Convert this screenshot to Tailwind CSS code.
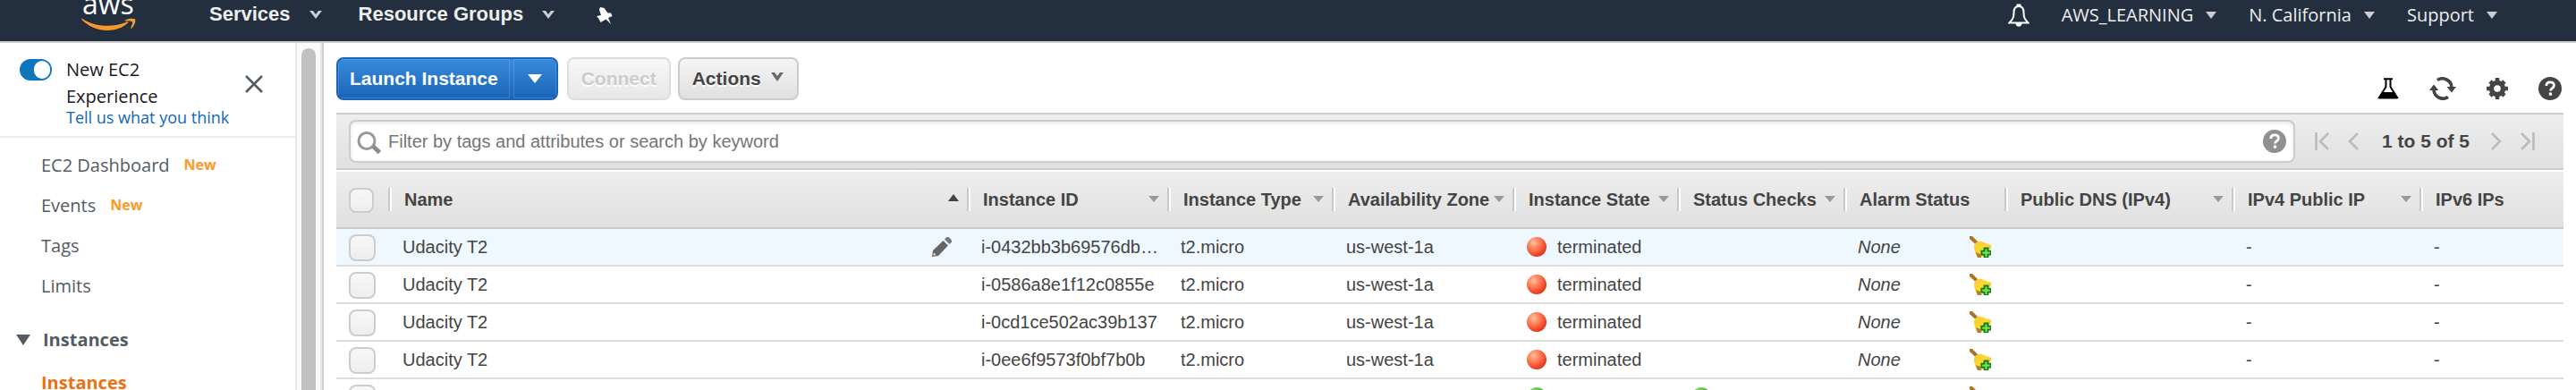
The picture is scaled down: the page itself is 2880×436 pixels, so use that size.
<!DOCTYPE html>
<html lang="en">
<head>
<meta charset="utf-8">
<title>EC2 Management Console</title>
<script src="https://cdn.jsdelivr.net/npm/@tailwindcss/browser@4"></script>
</head>
<body class="flex h-screen flex-col overflow-hidden bg-white font-['Liberation_Sans',Arial,sans-serif] text-xl text-[#444]">

<svg class="absolute h-0 w-0" aria-hidden="true">
  <defs>
    <radialGradient id="red" cx="35%" cy="30%" r="75%"><stop offset="0" stop-color="#ffc09a"/><stop offset=".55" stop-color="#ff6a45"/><stop offset="1" stop-color="#dc3018"/></radialGradient>
    <radialGradient id="green" cx="35%" cy="30%" r="75%"><stop offset="0" stop-color="#a8f07a"/><stop offset=".55" stop-color="#4ec22e"/><stop offset="1" stop-color="#238a14"/></radialGradient>
    <linearGradient id="gold" x1="0" y1="0" x2="1" y2="1"><stop offset="0" stop-color="#f3c93a"/><stop offset=".5" stop-color="#ffd92e"/><stop offset="1" stop-color="#e0a52a"/></linearGradient>
  </defs>
  <symbol id="i-bellplus" viewBox="0 0 24 24">
    <path d="M0 0h3l7 7-3 2.500L0 3z" fill="#a8752a"/>
    <path d="M7 7.500C9 5.500 13 5 16 7l8 3v3L13 24H9C7 21 5 16 5 12c0-2 .8-3.500 2-4.500z" fill="url(#gold)"/>
    <path d="M7 18l2 6h4l-1-4z" fill="#b07d33"/>
    <path d="M16.500 13.500h4v3.200h3.200v4h-3.200V24h-4v-3.300h-3.200v-4h3.200z" fill="#7be04a" stroke="#0f7d16" stroke-width="1.800"/>
  </symbol>
  <symbol id="i-help" viewBox="0 0 26 26">
    <circle cx="13" cy="13" r="13" fill="currentColor"/>
    <path d="M8.800 10c0-2.700 1.900-4.200 4.300-4.200 2.500 0 4.300 1.400 4.300 3.700 0 3-3.900 3.100-3.900 6" fill="none" stroke="#fff" stroke-width="2.800"/>
    <rect x="11.900" y="17.500" width="3.200" height="3.200" fill="#fff"/>
  </symbol>
</svg>

<header class="flex h-12 shrink-0 items-start border-b-2 border-[#ccc] bg-[#232f3e] text-[#eee] [text-shadow:0_2px_0_#000]">
  <a href="#" aria-label="aws" class="ml-[90px] mr-20 block">
    <svg class="block" width="64" height="46" viewBox="0 0 64 46">
      <text x="2" y="16" font-family="Open Sans, sans-serif" font-size="32" font-weight="500" fill="#fff" style="text-shadow:none">aws</text>
      <path d="M1 21.500c-.6-.7.300-1 1-.5 8 5 17 7.800 28 7.800 8 0 15.500-1.700 22-4.400 1.200-.5 2 .5 1 1.400C47 31 39 34 30 34 18 34 8 29 1 21.500z" fill="#f7982f"/>
      <path d="M50 22.500c3-1.800 8-2.300 11-1.300 1 2.500-.5 7.500-4 10.600-.8.500-1.200.2-.8-.6 1-2.300 2.300-5.800 1.700-6.900-.7-1-4.500-.9-7.200-.8-1 0-1.300-.5-.7-1z" fill="#f7982f"/>
    </svg>
  </a>
  <nav class="flex items-center pt-1 text-[22px] leading-6 font-bold">
    <button class="flex items-center gap-5 font-bold">Services
      <svg class="h-3 w-4" viewBox="0 0 16 12"><path d="M1 2h4l3 4 3-4h4L8 11z" fill="#ccc"/></svg></button>
    <button class="ml-10 flex items-center gap-5 font-bold">Resource Groups
      <svg class="h-3 w-4" viewBox="0 0 16 12"><path d="M1 2h4l3 4 3-4h4L8 11z" fill="#ccc"/></svg></button>
    <button class="ml-[46px] mt-1" aria-label="Pin">
      <svg class="h-5 w-[18px]" viewBox="0 0 18 20"><path d="M4 0L8.500 1 12.500 6.500 16 6.500 17.500 10 13 12 16 19 10.500 13.500 4.500 17 2.500 13 0 10 5 9 3 3z" fill="#fff"/></svg></button>
  </nav>
  <div class="ml-auto mr-[88px] flex items-center gap-9 pt-1 font-['Open_Sans',sans-serif] leading-[26px]">
    <button aria-label="Notifications">
      <svg class="block h-[26px] w-6" viewBox="0 0 24 26"><path d="M10.500 3V1.500h3V3M12 3c-4 0-5.500 3-5.500 7 0 6-1.500 8-5 11.500h21C19 18 17.500 16 17.500 10c0-4-1.500-7-5.500-7z" fill="none" stroke="#fff" stroke-width="2"/><path d="M8.500 22h7c0 5-7 5-7 0z" fill="#fff"/></svg></button>
    <button class="flex items-center gap-[14px]">AWS_LEARNING
      <svg class="h-2 w-3" viewBox="0 0 12 8"><path d="M0 0h12L6 8z" fill="#ccc"/></svg></button>
    <button class="flex items-center gap-[14px]">N. California
      <svg class="h-2 w-3" viewBox="0 0 12 8"><path d="M0 0h12L6 8z" fill="#ccc"/></svg></button>
    <button class="flex items-center gap-[14px]">Support
      <svg class="h-2 w-3" viewBox="0 0 12 8"><path d="M0 0h12L6 8z" fill="#ccc"/></svg></button>
  </div>
</header>

<div class="flex min-h-0 flex-1">
  <aside class="w-[330px] shrink-0 overflow-hidden font-['Open_Sans',sans-serif] text-[#545b64]">
    <div class="flex items-start border-b-2 border-[#eaeded] pt-[15px] pb-[13px] pl-[22px]">
      <label class="mt-[3px] block h-6 w-9 shrink-0">
        <input id="newexp" type="checkbox" checked class="peer sr-only" aria-label="New EC2 Experience">
        <span class="flex h-6 w-9 items-center justify-end rounded-full bg-[#1075bd] pr-[2px]"><span class="h-5 w-[18px] rounded-full bg-white"></span></span>
      </label>
      <div class="ml-4 w-[196px]">
        <label for="newexp" class="block w-[120px] leading-[30px] text-[#16191f]">New EC2 Experience</label>
        <a href="#" class="block text-lg leading-4 whitespace-nowrap text-[#1166bb]">Tell us what you think</a>
      </div>
      <button class="mt-[21px] ml-1" aria-label="Close"><svg class="block h-5 w-5" viewBox="0 0 20 20"><path d="M1 1l18 18M19 1L1 19" stroke="#545b64" stroke-width="2.600"/></svg></button>
    </div>
    <nav class="flex flex-col pt-2 leading-[45px]">
      <a href="#" class="flex items-center gap-4 pl-[46px]">EC2 Dashboard <span class="text-base leading-[45px] font-bold text-[#ff9926]">New</span></a>
      <a href="#" class="flex items-center gap-4 pl-[46px]">Events <span class="text-base leading-[45px] font-bold text-[#ff9926]">New</span></a>
      <a href="#" class="pl-[46px]">Tags</a>
      <a href="#" class="pl-[46px]">Limits</a>
      <button class="mt-[14px] flex items-center gap-[14px] pl-[18px] leading-[48px] font-bold"><svg class="h-3 w-4" viewBox="0 0 16 12"><path d="M0 0h16L8 12z" fill="#545b64"/></svg>Instances</button>
      <a href="#" class="pl-[46px] leading-[48px] font-bold text-[#ec7211]">Instances</a>
    </nav>
  </aside>

  <div class="flex w-[30px] shrink-0 justify-center border-x-2 border-[#e4e6e8] bg-[#fafafa] pt-[6px]"><div class="h-full w-4 rounded-t-full bg-[#c1c1c1]"></div></div>

  <main class="min-w-0 flex-1 border-l-2 border-[#ccd0d3] pr-[14px] pl-[14px]">
    <div class="flex pt-4 pb-[14px] text-[21px] font-bold">
      <div class="flex h-12 overflow-hidden rounded-lg border-2 border-[#1a66b8] bg-linear-to-b from-[#388add] to-[#1a66b8] text-white [text-shadow:0_2px_1px_#1a4f8c]">
        <button class="border border-white/15 px-3 font-bold">Launch Instance</button>
        <button class="ml-1 w-12 border border-white/15" aria-label="Launch options"><svg class="mx-auto h-[10px] w-4" viewBox="0 0 16 10"><path d="M0 0h16L8 10z" fill="#fff"/></svg></button>
      </div>
      <button disabled class="ml-[10px] h-12 rounded-lg border-2 border-[#ddd] bg-linear-to-b from-[#f7f7f7] to-[#e8e8e8] px-[14px] font-bold text-[#ccc] [text-shadow:0_2px_0_#fff]">Connect</button>
      <button class="ml-2 flex h-12 items-center gap-[10px] rounded-lg border-2 border-[#ccc] bg-linear-to-b from-[#f5f5f5] to-[#e0e0e0] px-[14px] font-bold [text-shadow:0_2px_0_#fff]">Actions
        <svg class="mb-1 h-3 w-4" viewBox="0 0 16 12"><path d="M1 1h4l3 4 3-4h4L8 11z" fill="#6a6a6a"/></svg></button>
      <div class="mr-[2px] ml-auto flex items-center gap-[34px] pt-[22px]">
        <button aria-label="Experiments"><svg class="block h-6 w-6" viewBox="0 0 24 24"><path d="M7 1.200h10M9.500 2v8L2 22h20L14.500 10V2" fill="none" stroke="#000" stroke-width="2"/><path d="M5.500 16h13l4 7.500h-21z"/></svg></button>
        <button aria-label="Refresh"><svg class="block h-[26px] w-[30px]" viewBox="0 0 30 26"><path d="M9 3.500C15-.5 24 3 25 11M21 22.500C15 26.500 6 23 5 15" fill="none" stroke="#444" stroke-width="3.600"/><path d="M19.500 11H30l-5 6.500zM0 15h10.500L5 8.500z" fill="#444"/></svg></button>
        <button aria-label="Settings"><svg class="block h-6 w-6" viewBox="0 0 24 24"><circle cx="12" cy="12" r="6.500" fill="none" stroke="#444" stroke-width="5.400"/><path d="M12 0v4M12 20v4M0 12h4M20 12h4M4 4l3 3M17 17l3 3M4 20l3-3M17 7l3-3" stroke="#444" stroke-width="4.600"/></svg></button>
        <button aria-label="Help" class="text-[#444]"><svg class="block h-[26px] w-[26px]"><use href="#i-help"/></svg></button>
      </div>
    </div>

    <div class="flex h-16 items-center border-y-2 border-[#ccc] bg-linear-to-b from-[#eee] to-[#e0e0e0] pr-8 pl-[14px]">
      <div class="flex h-12 flex-1 items-center rounded-lg border-2 border-[#ccc] bg-white pr-2 pl-[7px] shadow-[inset_0_2px_4px_#e8e8e8]">
        <svg class="mt-1 h-[26px] w-7" viewBox="0 0 28 26"><circle cx="11" cy="10.500" r="9" fill="none" stroke="#999" stroke-width="3"/><path d="M18 16.500l7.500 7" stroke="#8c8c8c" stroke-width="5"/></svg>
        <input type="text" aria-label="Filter instances" placeholder="Filter by tags and attributes or search by keyword" class="ml-[7px] min-w-0 flex-1 bg-transparent text-xl outline-none placeholder:text-[#757575]">
        <button aria-label="Filter help" class="text-[#909090]"><svg class="block h-[26px] w-[26px]"><use href="#i-help"/></svg></button>
      </div>
      <div class="ml-[22px] flex items-center text-[#bbb]">
        <button aria-label="First page"><svg class="block h-5 w-4" viewBox="0 0 16 20"><path d="M1.500 0v20M15 1L6 10l9 9" fill="none" stroke="currentColor" stroke-width="2.600"/></svg></button>
        <button class="ml-[21px]" aria-label="Previous page"><svg class="block h-5 w-3" viewBox="0 0 12 20"><path d="M11 1L2 10l9 9" fill="none" stroke="currentColor" stroke-width="2.600"/></svg></button>
        <span class="ml-[26px] text-[21px] font-bold text-[#444]">1 to 5 of 5</span>
        <button class="ml-6" aria-label="Next page"><svg class="block h-5 w-3" viewBox="0 0 12 20"><path d="M1 1l9 9-9 9" fill="none" stroke="currentColor" stroke-width="2.600"/></svg></button>
        <button class="ml-[21px]" aria-label="Last page"><svg class="block h-5 w-4" viewBox="0 0 16 20"><path d="M14.500 0v20M1 1l9 9-9 9" fill="none" stroke="currentColor" stroke-width="2.600"/></svg></button>
      </div>
    </div>

    <table class="mt-[2px] w-full table-fixed border-separate border-spacing-0 text-left whitespace-nowrap">
      <colgroup>
        <col class="w-[58px]"><col><col class="w-[224px]"><col class="w-[184px]"><col class="w-[202px]"><col class="w-[184px]"><col class="w-[186px]"><col class="w-[180px]"><col class="w-[254px]"><col class="w-[210px]"><col class="w-[161px]">
      </colgroup>
      <thead><tr id="head" class="h-16 bg-linear-to-b from-[#eee] to-[#dfdfdf] shadow-[inset_0_-2px_0_#c8c8c8]"></tr></thead>
      <tbody id="rows"></tbody>
    </table>
  </main>
</div>

<script>
const down = '<svg class="h-2 w-3" viewBox="0 0 12 8"><path d="M0 0h12L6 7z" fill="#999"/></svg>';
const up = '<svg class="mb-1 h-2 w-3" viewBox="0 0 12 8"><path d="M0 8h12L6 0z" fill="#444"/></svg>';
const columns = [['Name', up], ['Instance ID', down], ['Instance Type', down], ['Availability Zone', down], ['Instance State', down], ['Status Checks', down], ['Alarm Status', ''], ['Public DNS (IPv4)', down], ['IPv4 Public IP', down], ['IPv6 IPs', '']];
document.getElementById('head').innerHTML =
  '<th class="p-0 pl-[14px]"><input type="checkbox" aria-label="Select all" class="block h-7 w-7 appearance-none rounded-lg border-2 border-[#ccc] bg-linear-to-b from-[#f7f7f7] to-[#eee]"></th>' +
  columns.map(([name, arrow]) => `<th class="p-0 pb-[2px]"><div class="flex h-[26px] items-center justify-between border-l-2 border-[#c8c8c8] pr-[9px] pl-4 shadow-[inset_2px_0_0_#fff]"><span>${name}</span>${arrow}</div></th>`).join('');

const ball = fill => `<svg class="h-[22px] w-[22px] shrink-0" viewBox="0 0 22 22"><circle cx="11" cy="11" r="11" fill="url(#${fill})"/></svg>`;
const pencil = '<button aria-label="Edit name"><svg class="block h-[22px] w-[22px]" viewBox="0 0 22 22"><path d="M0 22l1-7L12.500 4l5.500 5.500L7 21z" fill="#666"/><path d="M14 2.500L16.500 0h2L22 3.500v2L19.500 8z" fill="#777"/><path d="M1.500 20.500l.5-3 2.500 2.500z" fill="#eee"/></svg></button>';
const instances = [
  ['i-0432bb3b69576db20', 'terminated'],
  ['i-0586a8e1f12c0855e', 'terminated'],
  ['i-0cd1ce502ac39b137', 'terminated'],
  ['i-0ee6f9573f0bf7b0b', 'terminated'],
  ['i-0bb08edeb1edbb4f9', 'running', '2/2 checks …', 'ec2-54-183-148-1…', '54.183.148.102'],
];
document.getElementById('rows').innerHTML = instances.map(([id, state, checks, dns, ip], i) => `
<tr class="h-[42px] leading-6 *:border-b-2 *:border-[#ddd] ${i ? '' : 'bg-[#f0f8ff]'}">
  <td class="p-0 pt-[2px] pl-[14px]"><input type="checkbox" aria-label="Select ${id}" class="block h-[30px] w-[30px] appearance-none rounded-lg border-2 border-[#ccc] bg-linear-to-b from-[#f7f7f7] to-[#eee]"></td>
  <td class="p-0 pl-4"><div class="flex items-center justify-between pr-[17px]"><span>${i === 4 ? '' : 'Udacity T2'}</span>${i ? '' : pencil}</div></td>
  <td class="truncate p-0 pr-[9px] pl-4">${id}</td>
  <td class="p-0 pl-[15px]">t2.micro</td>
  <td class="p-0 pl-4">us-west-1a</td>
  <td class="p-0 pl-4"><div class="flex items-center gap-3">${ball(state === 'running' ? 'green' : 'red')}${state}</div></td>
  <td class="p-0 pl-4">${checks ? `<div class="flex items-center gap-3">${ball('green')}${checks}</div>` : ''}</td>
  <td class="p-0 pl-4"><div class="flex items-center justify-between pr-[15px] italic">None<button aria-label="Add alarm"><svg class="block h-6 w-6"><use href="#i-bellplus"/></svg></button></div></td>
  <td class="p-0 pl-4">${dns || ''}</td>
  <td class="p-0 pl-4">${ip || '-'}</td>
  <td class="p-0 pl-4">-</td>
</tr>`).join('');
</script>
</body>
</html>
